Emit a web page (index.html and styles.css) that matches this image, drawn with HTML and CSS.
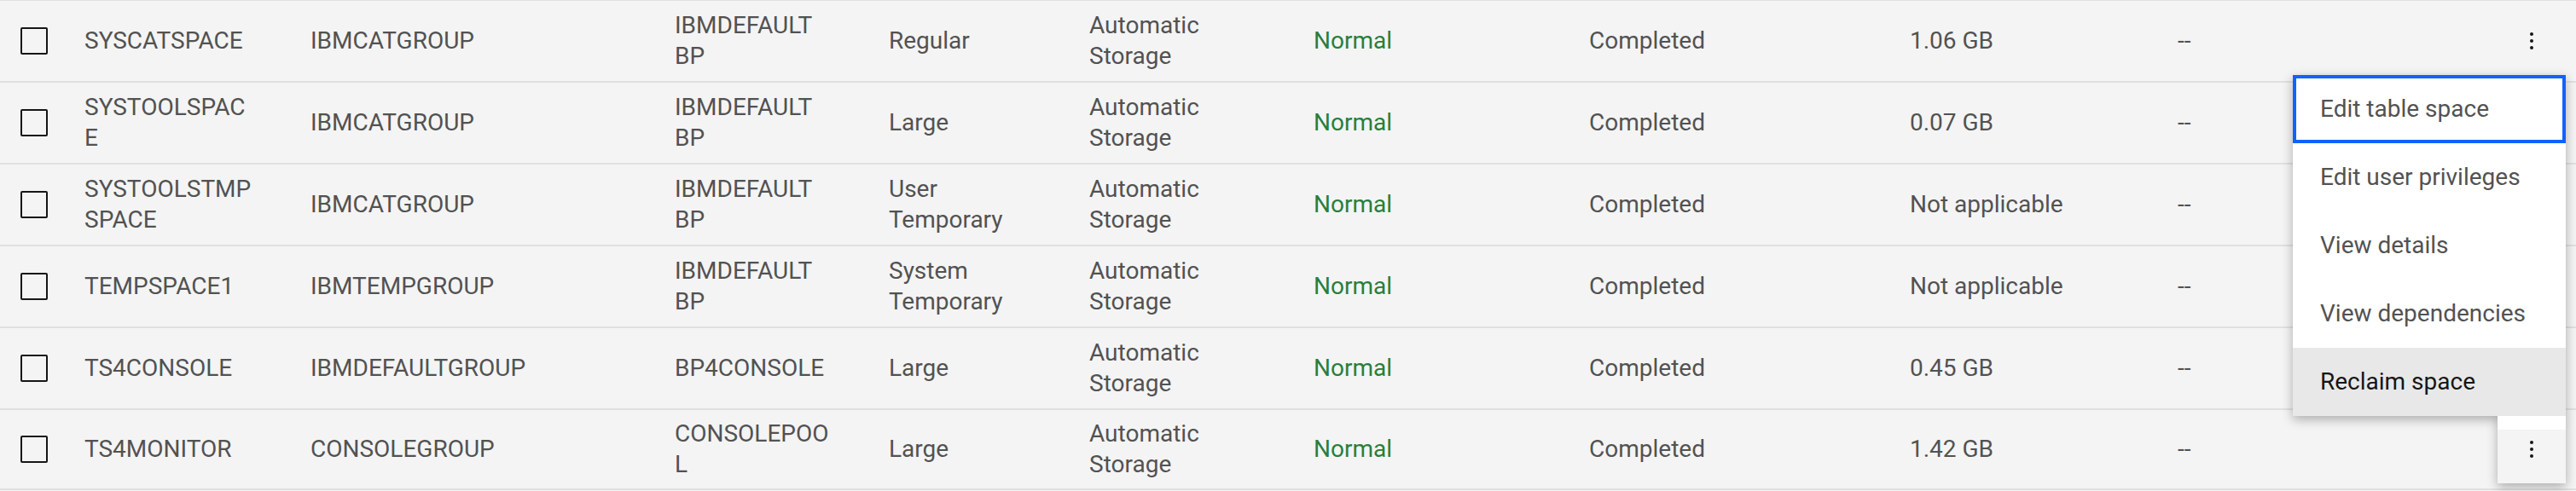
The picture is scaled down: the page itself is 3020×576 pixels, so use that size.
FILE: index.html
```html
<!DOCTYPE html>
<html lang="en">
<head>
<meta charset="utf-8">
<title>Table spaces</title>
<link rel="stylesheet" href="styles.css">
</head>
<body>
<div class="page">
  <table class="data-table">
    <colgroup>
      <col class="c-check"><col class="c-name"><col class="c-group"><col class="c-pool"><col class="c-type"><col class="c-mgmt"><col class="c-state"><col class="c-op"><col class="c-size"><col class="c-extra"><col class="c-menu">
    </colgroup>
    <tbody>
      <tr>
        <td class="cell-check"><span class="checkbox"></span></td>
        <td>SYSCATSPACE</td>
        <td>IBMCATGROUP</td>
        <td>IBMDEFAULT<wbr>BP</td>
        <td>Regular</td>
        <td>Automatic Storage</td>
        <td class="ok">Normal</td>
        <td>Completed</td>
        <td>1.06 GB</td>
        <td>--</td>
        <td class="cell-menu"><button class="overflow-btn" aria-label="Options"><svg class="kebab" viewBox="0 0 32 32" width="32" height="32"><circle cx="16" cy="8" r="2"/><circle cx="16" cy="16" r="2"/><circle cx="16" cy="24" r="2"/></svg></button></td>
      </tr>
      <tr>
        <td class="cell-check"><span class="checkbox"></span></td>
        <td>SYSTOOLSPAC<wbr>E</td>
        <td>IBMCATGROUP</td>
        <td>IBMDEFAULT<wbr>BP</td>
        <td>Large</td>
        <td>Automatic Storage</td>
        <td class="ok">Normal</td>
        <td>Completed</td>
        <td>0.07 GB</td>
        <td>--</td>
        <td class="cell-menu"></td>
      </tr>
      <tr>
        <td class="cell-check"><span class="checkbox"></span></td>
        <td>SYSTOOLSTMP<wbr>SPACE</td>
        <td>IBMCATGROUP</td>
        <td>IBMDEFAULT<wbr>BP</td>
        <td>User Temporary</td>
        <td>Automatic Storage</td>
        <td class="ok">Normal</td>
        <td>Completed</td>
        <td>Not applicable</td>
        <td>--</td>
        <td class="cell-menu"></td>
      </tr>
      <tr>
        <td class="cell-check"><span class="checkbox"></span></td>
        <td>TEMPSPACE1</td>
        <td>IBMTEMPGROUP</td>
        <td>IBMDEFAULT<wbr>BP</td>
        <td>System Temporary</td>
        <td>Automatic Storage</td>
        <td class="ok">Normal</td>
        <td>Completed</td>
        <td>Not applicable</td>
        <td>--</td>
        <td class="cell-menu"></td>
      </tr>
      <tr>
        <td class="cell-check"><span class="checkbox"></span></td>
        <td>TS4CONSOLE</td>
        <td>IBMDEFAULTGROUP</td>
        <td>BP4CONSOLE</td>
        <td>Large</td>
        <td>Automatic Storage</td>
        <td class="ok">Normal</td>
        <td>Completed</td>
        <td>0.45 GB</td>
        <td>--</td>
        <td class="cell-menu"></td>
      </tr>
      <tr>
        <td class="cell-check"><span class="checkbox"></span></td>
        <td>TS4MONITOR</td>
        <td>CONSOLEGROUP</td>
        <td>CONSOLEPOO<wbr>L</td>
        <td>Large</td>
        <td>Automatic Storage</td>
        <td class="ok">Normal</td>
        <td>Completed</td>
        <td>1.42 GB</td>
        <td>--</td>
        <td class="cell-menu"><button class="overflow-btn is-open" aria-label="Options" aria-expanded="true"><svg class="kebab" viewBox="0 0 32 32" width="32" height="32"><circle cx="16" cy="8" r="2"/><circle cx="16" cy="16" r="2"/><circle cx="16" cy="24" r="2"/></svg></button></td>
      </tr>
    </tbody>
  </table>

  <ul class="overflow-menu" role="menu">
    <li class="menu-item is-focused" role="menuitem">Edit table space</li>
    <li class="menu-item" role="menuitem">Edit user privileges</li>
    <li class="menu-item" role="menuitem">View details</li>
    <li class="menu-item" role="menuitem">View dependencies</li>
    <li class="menu-item is-hover" role="menuitem">Reclaim space</li>
  </ul>
</div>
</body>
</html>
```

FILE: styles.css
```css
* {
  box-sizing: border-box;
}

html,
body {
  margin: 0;
  padding: 0;
  background: #f4f4f4;
}

body {
  font-family: Roboto, "Liberation Sans", sans-serif;
  font-size: 28px;
  line-height: 36px;
  color: #525252;
  overflow: hidden;
}

.page {
  position: relative;
  width: 3020px;
  height: 576px;
  overflow: hidden;
}

.data-table {
  width: 3020px;
  margin-top: -1px;
  table-layout: fixed;
  border-collapse: separate;
  border-spacing: 0;
  background: #f4f4f4;
}

.c-check { width: 67px; }
.c-name { width: 265px; }
.c-group { width: 427px; }
.c-pool { width: 251px; }
.c-type { width: 235px; }
.c-mgmt { width: 263px; }
.c-state { width: 323px; }
.c-op { width: 376px; }
.c-size { width: 314px; }
.c-extra { width: 407px; }
.c-menu { width: 92px; }

.data-table td {
  height: 96px;
  padding: 0 32px;
  border-top: 2px solid #e0e0e0;
  vertical-align: middle;
  text-align: left;
  font-weight: 400;
}

.data-table tr:last-child td {
  border-bottom: 2px solid #e0e0e0;
}

.data-table td.cell-check {
  padding: 0 0 0 24px;
}

.data-table td.cell-menu {
  padding: 0 12px 0 0;
}

.checkbox {
  display: block;
  width: 32px;
  height: 32px;
  border: 2px solid #161616;
  border-radius: 2px;
  background: transparent;
}

.ok {
  color: #2a7e3b;
}

.overflow-btn {
  display: flex;
  align-items: center;
  justify-content: center;
  width: 80px;
  height: 80px;
  padding: 0;
  border: 0;
  background: transparent;
  position: relative;
}

.overflow-btn.is-open {
  background: #f4f4f4;
  box-shadow: 0 4px 12px rgba(0, 0, 0, 0.3);
  z-index: 1;
}

.kebab {
  display: block;
  fill: #161616;
}

.overflow-menu {
  position: absolute;
  top: 88px;
  right: 12px;
  width: 320px;
  margin: 0;
  padding: 0;
  list-style: none;
  background: #ffffff;
  box-shadow: 0 4px 12px rgba(0, 0, 0, 0.3);
  z-index: 5;
}

.overflow-menu::after {
  content: "";
  position: absolute;
  right: 0;
  bottom: -16px;
  width: 80px;
  height: 16px;
  background: #ffffff;
}

.menu-item {
  display: flex;
  align-items: center;
  height: 80px;
  padding: 0 32px;
  color: #525252;
  white-space: nowrap;
}

.menu-item.is-focused {
  outline: 4px solid #0f62fe;
  outline-offset: -4px;
}

.menu-item.is-hover {
  background: #e8e8e8;
  color: #161616;
}
```
